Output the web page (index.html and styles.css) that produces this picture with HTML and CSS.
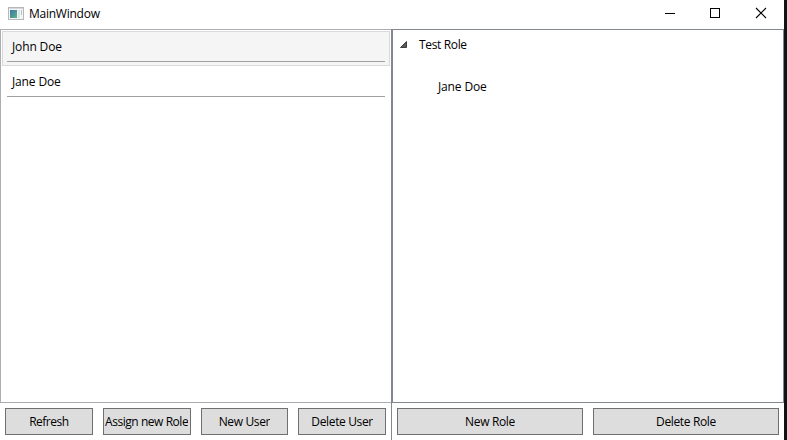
FILE: index.html
```html
<!DOCTYPE html>
<html lang="en">
<head>
<meta charset="utf-8">
<title>MainWindow</title>
<link rel="stylesheet" href="styles.css">
</head>
<body>
<div class="window">
  <header class="titlebar">
    <svg class="app-icon" width="16" height="14" viewBox="0 0 16 14" shape-rendering="crispEdges">
      <defs><linearGradient id="pane" x1="0" y1="0" x2="1" y2="1"><stop offset="0" stop-color="#3f73a8"/><stop offset="1" stop-color="#5cb585"/></linearGradient></defs>
      <rect x=".5" y=".5" width="15" height="12" fill="#f4f5f6" stroke="#b4b8bb"/>
      <path d="M1 1h14v1H1z" fill="#d5d9dc"/>
      <rect x="2" y="3" width="7" height="8" fill="url(#pane)"/>
      <rect x="10" y="3" width="2" height="8" fill="#dfe4e6"/>
      <rect x="13" y="3" width="1" height="5" fill="#a9c9c5"/>
    </svg>
    <h1 class="title">MainWindow</h1>
    <div class="controls">
      <svg width="46" height="29" viewBox="0 0 46 29" shape-rendering="crispEdges"><path d="M19 13h10v1H19z"/></svg>
      <svg width="46" height="29" viewBox="0 0 46 29" shape-rendering="crispEdges"><path d="M18.500 8.500h9v9h-9z" fill="none" stroke="#000"/></svg>
      <svg width="46" height="29" viewBox="0 0 46 29"><path d="M18 8l10 10M28 8L18 18" fill="none" stroke="#000" stroke-width="1.100"/></svg>
    </div>
  </header>
  <main class="content">
    <section class="users">
      <ul class="list">
        <li class="item selected"><div class="line">John Doe</div></li>
        <li class="item"><div class="line">Jane Doe</div></li>
      </ul>
      <div class="buttons four">
        <button><span class="tight">Refresh</span></button>
        <button><span class="tighter">Assign new Role</span></button>
        <button><span>New User</span></button>
        <button><span>Delete User</span></button>
      </div>
    </section>
    <section class="roles">
      <div class="tree">
        <div class="node">
          <svg class="arrow" width="7" height="7" viewBox="0 0 7 7"><path d="M6.500 .5v6h-6z" fill="#595959" stroke="#262626" stroke-width=".8"/></svg>
          <span class="role">Test Role</span>
        </div>
        <div class="leaf">Jane Doe</div>
      </div>
      <div class="buttons two">
        <button><span>New Role</span></button>
        <button><span>Delete Role</span></button>
      </div>
    </section>
  </main>
</div>
</body>
</html>
```
FILE: styles.css
```css
* { box-sizing: border-box; }
body {
  margin: 0;
  height: 440px;
  overflow: hidden;
  background: #111214;
  color: #000;
  font: 12px/16px "Segoe UI", "Open Sans", sans-serif;
  letter-spacing: -0.14px;
}
.window { width: 784px; height: 440px; background: #fff; display: flex; flex-direction: column; }
.titlebar { height: 29px; display: flex; align-items: flex-start; padding-left: 8px; }
.app-icon { margin-top: 7px; }
.title { margin: 6px 0 0 5px; font-size: 12px; font-weight: 400; letter-spacing: -0.25px; }
.controls { display: flex; margin-left: auto; }
.content { flex: 1; display: grid; grid-template-columns: 392px 392px; }
.users, .roles { display: grid; grid-template-rows: 374px 37px; min-width: 0; }
.users { border-right: 1px solid #828790; }
.list { list-style: none; margin: 0; padding: 1px; border: 1px solid #abadb3; border-right-width: 0; }
.item { height: 35px; padding: 4px; border: 1px solid transparent; }
.selected { background: #f5f5f5; border-color: #dadada; }
.line { height: 26px; padding: 3px 0 0 5px; border-bottom: 1px solid #a0a0a0; }
.tree { border: 1px solid #828790; padding: 7px; }
.node { display: flex; align-items: flex-start; }
.arrow { margin-top: 4px; margin-right: 12px; }
.role { letter-spacing: -0.35px; }
.leaf { margin: 26px 0 0 38px; }
.buttons { display: grid; padding: 5px; column-gap: 10px; }
.four { grid-template-columns: repeat(4, 1fr); }
.two { grid-template-columns: repeat(2, 1fr); }
button {
  min-width: 0;
  height: 27px;
  padding: 0 1px;
  border: 1px solid #707070;
  border-radius: 0;
  background: #ddd;
  color: #000;
  font: inherit;
  letter-spacing: -0.35px;
  display: flex;
  justify-content: center;
  align-items: center;
}
button span { overflow: hidden; white-space: nowrap; }
.tight { letter-spacing: -0.5px; }
.tighter { letter-spacing: -0.45px; }
```
